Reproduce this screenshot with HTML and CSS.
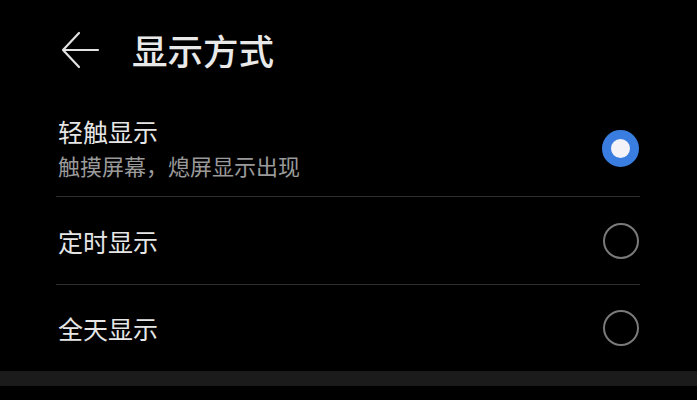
FILE: index.html
```html
<!DOCTYPE html>
<html lang="zh">
<head>
<meta charset="utf-8">
<title>显示方式</title>
<link rel="stylesheet" href="styles.css">
</head>
<body>
<div class="screen">
  <header class="header">
    <svg class="back" width="40" height="40" viewBox="0 0 40 40" aria-hidden="true">
      <path d="M19 3 L3 20 L19 37 M3 20 L38 20" fill="none" stroke="#e2e2e2" stroke-width="2.2" stroke-linecap="round" stroke-linejoin="round"/>
    </svg>
    <h1 class="title">显示方式</h1>
  </header>
  <ul class="list">
    <li class="item item-tall">
      <div class="texts">
        <div class="label">轻触显示</div>
        <div class="sub">触摸屏幕，熄屏显示出现</div>
      </div>
      <span class="radio radio-on"></span>
    </li>
    <li class="item">
      <div class="texts">
        <div class="label">定时显示</div>
      </div>
      <span class="radio"></span>
    </li>
    <li class="item item-last">
      <div class="texts">
        <div class="label">全天显示</div>
      </div>
      <span class="radio"></span>
    </li>
  </ul>
  <div class="band"></div>
</div>
</body>
</html>
```
FILE: styles.css
```css
* { box-sizing: border-box; }
html, body {
  margin: 0;
  padding: 0;
  background: #000;
}
body {
  font-family: "Noto Sans CJK SC", "Noto Sans", sans-serif;
  color: #e8e8e8;
  width: 697px;
  height: 400px;
  overflow: hidden;
}
.screen {
  display: flex;
  flex-direction: column;
}
.header {
  height: 100px;
  display: flex;
  align-items: center;
  padding-left: 60px;
  padding-bottom: 1px;
}
.back {
  display: block;
}
.title {
  margin: 0 0 0 32px;
  font-size: 35.5px;
  font-weight: 500;
  line-height: 40px;
  color: #e9e9e9;
}
.list {
  list-style: none;
  margin: 0 57px 0 56px;
  padding: 0;
}
.item {
  height: 88px;
  display: flex;
  align-items: center;
  justify-content: space-between;
  border-bottom: 1px solid #2f2f2f;
  padding-left: 2px;
  padding-right: 1px;
}
.item-tall { height: 97px; }
.item-last { border-bottom: none; height: 86px; }
.texts {
  display: flex;
  flex-direction: column;
}
.label {
  font-size: 25px;
  line-height: 34px;
  color: #e6e6e6;
}
.sub {
  font-size: 22px;
  line-height: 34px;
  color: #9a9a9a;
}
.radio {
  width: 36px;
  height: 36px;
  border-radius: 50%;
  border: 2px solid #7a7a7a;
  flex: none;
}
.radio-on {
  border: 9px solid #3a7de0;
  background: #f2f2f8;
  width: 37px;
  height: 37px;
}
.band {
  height: 15px;
  background: #1b1b1b;
}
```
